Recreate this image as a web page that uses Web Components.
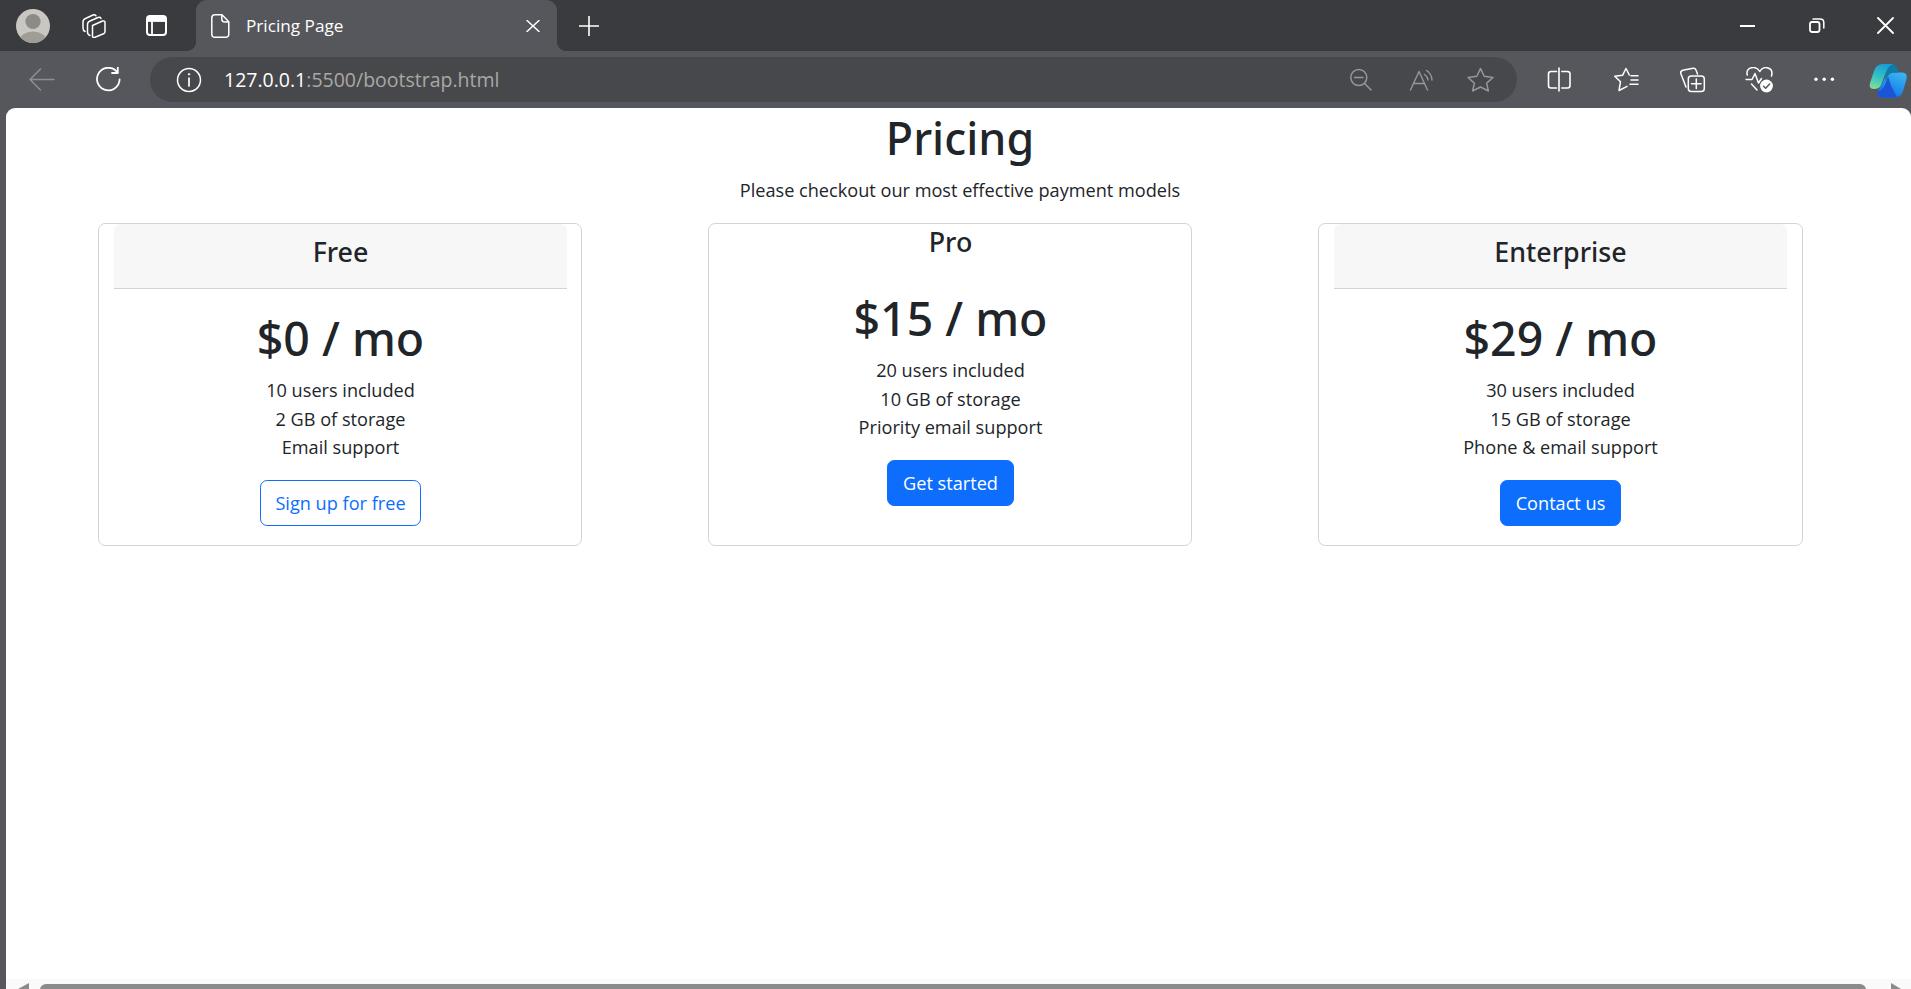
<!DOCTYPE html>
<html lang="en"><head><meta charset="utf-8"><title>Pricing Page</title>
<style>
html,body{margin:0;height:100%;overflow:hidden;background:#56575c}
body{font-family:"Open Sans","Noto Sans",sans-serif}
</style></head><body>
<browser-window>
  <tab-strip slot="tabs" title-text="Pricing Page"></tab-strip>
  <nav-toolbar slot="nav"></nav-toolbar>
  <pricing-page>
    <pricing-card slot="cards" name="Free" price="$0 / mo" action="Sign up for free" variant="outline">
      <div>10 users included</div><div>2 GB of storage</div><div>Email support</div>
    </pricing-card>
    <pricing-card slot="cards" name="Pro" price="$15 / mo" action="Get started" plain>
      <div>20 users included</div><div>10 GB of storage</div><div>Priority email support</div>
    </pricing-card>
    <pricing-card slot="cards" name="Enterprise" price="$29 / mo" action="Contact us" last>
      <div>30 users included</div><div>15 GB of storage</div><div>Phone &amp; email support</div>
    </pricing-card>
  </pricing-page>
</browser-window>
<script>
function def(name, html, setup){
  customElements.define(name, class extends HTMLElement{
    connectedCallback(){
      if(this.shadowRoot) return;
      const r=this.attachShadow({mode:'open'});
      r.innerHTML=typeof html==='function'?html(this):html;
      if(setup) setup(r,this);
    }
  });
}
const ic=(x,y,w,h,body,extra='')=>`<svg width="${w}" height="${h}" viewBox="${x} ${y} ${w} ${h}" fill="none" stroke="currentColor" stroke-linecap="round" stroke-linejoin="round" style="flex:none;display:block;${extra}">${body}</svg>`;

def('browser-window',`<style>
:host{display:flex;flex-direction:column;height:989px;width:1911px;overflow:hidden;background:#56575c}
.page{flex:1;min-height:0;margin-left:6px;background:#fff;border-radius:9px 9px 0 0;display:flex;flex-direction:column}
</style><slot name="tabs"></slot><slot name="nav"></slot><div class="page"><slot></slot><fake-scrollbar></fake-scrollbar></div>`);

def('tab-strip',h=>`<style>
:host{display:flex;align-items:center;height:51px;background:#3a3b3f;color:#fff;flex:none;padding-left:16px;box-sizing:border-box}
.tab{position:relative;flex:none;width:361px;height:51px;margin-left:29px;background:#56575c;border-radius:11px 11px 0 0;display:flex;align-items:center;box-sizing:border-box;padding-left:15px}
.tab::before,.tab::after{content:"";position:absolute;bottom:0;width:10px;height:10px}
.tab::before{left:-10px;background:radial-gradient(circle at 0 0,transparent 10px,#56575c 10.5px)}
.tab::after{right:-10px;background:radial-gradient(circle at 100% 0,transparent 10px,#56575c 10.5px)}
.title{font-size:17.2px;margin-left:16px;flex:1;white-space:nowrap;line-height:20px}
.sp{flex:1}
</style>
<svg width="34" height="34" viewBox="16 9 34 34" style="flex:none;display:block"><defs><clipPath id="av"><circle cx="33" cy="26" r="17"/></clipPath></defs><circle cx="33" cy="26" r="17" fill="#c9c7c2"/><g clip-path="url(#av)"><circle cx="33" cy="21.5" r="7.6" fill="#8e8a85"/><ellipse cx="33" cy="41" rx="13.5" ry="9.5" fill="#a09c96"/></g></svg>
${ic(82,13,24,24,`<g stroke-width="1.5"><path d="M92.5 24.5 L102.5 20 Q105 19.5 105 21.5 V30.5 Q105 32 103.5 32.8 L94.5 36.5 Q92.5 37 92.5 35 Z"/><path d="M101 17.5 Q100 15.5 98 16.5 L90 20 Q87.5 21 87.5 23.5 V31 Q87.5 33.5 90 34.5"/><path d="M96 14.8 Q95 13.2 93 14 L85.5 17.5 Q83 18.5 83 21 V27 Q83 29.5 85 30.5"/></g>`,'margin-left:32px')}
${ic(146,15,21,21,`<rect x="147" y="16" width="19" height="19" rx="3" stroke-width="2"/><path d="M147 21 V19 Q147 16 150 16 H163 Q166 16 166 19 V21 Z" fill="currentColor" stroke-width="1"/><path d="M152 21 V35" stroke-width="1.8"/>`,'margin-left:40px')}
<div class="tab">
${ic(211,14,19,24,`<path d="M215 14.8 H222 L228.8 21.8 V34 Q228.8 37.3 225.5 37.3 H215 Q211.8 37.3 211.8 34 V18 Q211.8 14.8 215 14.8Z M221.8 15 V19 Q221.8 22 224.8 22 H228.6" stroke-width="1.5"/>`)}
<span class="title">${h.getAttribute('title-text')}</span>
${ic(526,21,14,12,`<path d="M527 21.5 L539 32.5 M539 21.5 L527 32.5" stroke-width="1.5"/>`,'margin-right:17px')}
</div>
${ic(579,15,20,20,`<path d="M589 15.5 V34.5 M579.5 25 H598.5" stroke-width="1.6"/>`,'margin-left:22px')}
<span class="sp"></span>
${ic(1740,24,15,2,`<path d="M1740 25 H1755" stroke-width="2" stroke-linecap="butt"/>`)}
${ic(1809,18,16,16,`<rect x="1810" y="22" width="9.5" height="10" rx="2.2" stroke-width="1.8"/><path d="M1813 19 H1820 Q1823.8 19 1823.8 22.5 V28" stroke-width="1.5"/>`,'margin-left:54px')}
${ic(1877,17,17,17,`<path d="M1878 18 L1893 33 M1893 18 L1878 33" stroke-width="1.8"/>`,'margin-left:52px;margin-right:17px')}
`);

def('nav-toolbar',`<style>
:host{display:flex;align-items:center;height:57px;padding:0 3px 0 29px;box-sizing:border-box;background:#56575c;color:#fff;flex:none}
.addr{flex:none;margin-left:29px;width:1367px;height:45px;background:#47484c;border-radius:23px;display:flex;align-items:center;box-sizing:border-box;padding-left:26px;color:#fff}
.url{font-size:19.5px;margin-left:22px;flex:1;line-height:26px;white-space:nowrap;color:#a9a8a4}
.url b{font-weight:400;color:#fff}
</style>
${ic(29,67,26,23,`<path d="M54 78.5 H30 M40.5 68 L30 78.5 L40.5 89" stroke-width="1.6" />`,'color:#8d8e92')}
${ic(95,67,26,25,`<path d="M117.5 72.5 A11.3 11.3 0 1 0 119.6 79.5" stroke-width="1.8"/><path d="M117.8 67.5 V73 H112" stroke-width="1.8"/>`,'margin-left:40px')}
<div class="addr">
${ic(176,67,26,26,`<circle cx="189" cy="80" r="11.5" stroke-width="1.5"/><path d="M189 78 V86" stroke-width="1.7"/><circle cx="189" cy="74.3" r=".7" fill="currentColor"/>`)}
<span class="url"><b>127.0.0.1</b>:5500/bootstrap.html</span>
${ic(1350,68,22,23,`<circle cx="1358.8" cy="77.5" r="8" stroke-width="1.5"/><path d="M1354.6 77.5 H1363 M1364.6 83.5 L1371 90" stroke-width="1.5"/>`,'color:#96979a')}
${ic(1409,67,24,22,`<path d="M1410.5 88 L1419 69.5 L1427.5 88 M1413.5 81.5 H1424.5" stroke-width="1.4"/><path d="M1424.5 72.5 Q1427.5 74.5 1428 78 M1426.5 68.5 Q1431.5 71.5 1432 78" stroke-width="1.4"/>`,'color:#96979a;margin-left:37px')}
${ic(1467,67,27,25,`<path d="M1480.5 68.5 L1484.2 76.3 L1493 77.4 L1486.6 83.2 L1488.4 91 L1480.5 87 L1472.6 91 L1474.4 83.2 L1468 77.4 L1476.8 76.3 Z" stroke-width="1.5"/>`,'color:#96979a;margin-left:34px;margin-right:23px')}
</div>
${ic(1547,67,25,25,`<path d="M1556.5 71.5 H1551 Q1548.5 71.5 1548.5 74 V85.5 Q1548.5 88 1551 88 H1556.5 M1559 68 V91 M1561.8 71.5 H1567.5 Q1570 71.5 1570 74 V85.5 Q1570 88 1567.5 88 H1561.8" stroke-width="1.6"/>`,'margin-left:30px')}
${ic(1613,67,26,25,`<path d="M1629.3 75 L1626 68.5 L1622.5 75.3 L1614.7 76.3 L1620.5 81.7 L1619 90.5 L1627 86.3" stroke-width="1.5"/><path d="M1631 75.8 H1638 M1631 80 H1638 M1630 84.2 H1638" stroke-width="1.5"/>`,'margin-left:41px')}
${ic(1679,67,27,26,`<rect x="1688.3" y="76" width="16" height="15.5" rx="3" stroke-width="1.5"/><path d="M1696.3 79 V88.5 M1691.5 83.7 H1701" stroke-width="1.5"/><path d="M1686 87 L1680.8 73.5 Q1680.2 71 1682.8 70.2 L1693 68.3 Q1695.2 68 1696 70 L1697.5 74" stroke-width="1.5"/>`,'margin-left:40px')}
${ic(1745,67,29,26,`<path d="M1747.3 75 C1745 67 1756 65 1759.7 71.5 C1763.5 65 1774 67 1771.5 76" stroke-width="1.5"/><path d="M1746 79.5 H1752 L1755 73.5 L1758.5 83 L1761.5 78.5 M1751.5 84 L1757 90" stroke-width="1.5"/><circle cx="1766.5" cy="86" r="6.4" fill="currentColor" stroke="none"/><path d="M1763.5 86.2 L1765.7 88.3 L1769.6 84" stroke="#56575c" stroke-width="1.5"/>`,'margin-left:39px')}
${ic(1813,77,22,5,`<circle cx="1816" cy="79.3" r="1.7" fill="currentColor" stroke="none"/><circle cx="1824.2" cy="79.3" r="1.7" fill="currentColor" stroke="none"/><circle cx="1832.4" cy="79.3" r="1.7" fill="currentColor" stroke="none"/>`,'margin-left:39px')}
<svg width="40" height="36" viewBox="1868 62 40 36" style="flex:none;display:block;margin-left:33px">
<defs>
<linearGradient id="cl" x1="0.6" y1="0" x2="0.3" y2="1"><stop offset="0" stop-color="#1a9cd8"/><stop offset=".55" stop-color="#35c4c0"/><stop offset="1" stop-color="#7fdc9c"/></linearGradient>
<linearGradient id="cr" x1="0.8" y1="0" x2="0.3" y2="1"><stop offset="0" stop-color="#38b6f2"/><stop offset=".7" stop-color="#1c86e8"/><stop offset="1" stop-color="#1a6fe0"/></linearGradient>
</defs>
<path d="M1894 72.5 H1902 Q1908 72.5 1906.5 79 L1903 91 Q1901 97.5 1894 97.5 H1881 Q1876.5 97.5 1878 91 L1886 76 Q1889 72.5 1894 72.5Z" fill="url(#cr)"/>
<path d="M1888 76 Q1891 88 1897.5 97.5 H1881 Q1876.5 97.5 1878 91 Q1885 90 1888 76Z" fill="#1c54d6"/>
<path d="M1889 64 H1893 Q1897 64.5 1898.5 72.5 H1894 Q1889 72.5 1887 78 L1885.5 82 Q1884 70 1889 64Z" fill="#0e7ba8"/>
<path d="M1882 64 H1893 Q1888 66 1886 72 L1881 85 Q1879.5 89 1874 89 Q1868.5 89 1870 83 L1874 71 Q1876 64.5 1882 64Z" fill="url(#cl)"/>
</svg>
`);

def('pricing-page',`<style>
:host{display:block;flex:1;min-height:0;color:#212529}
.head{text-align:center;padding-left:3px}
h1{font-family:"Noto Sans","Open Sans",sans-serif;font-size:44.8px;font-weight:500;line-height:57.6px;margin:0 0 9.6px;position:relative;top:1px}
p{font-size:18.15px;line-height:28.8px;margin:0 0 19.2px;position:relative;top:1px}
.cards{display:grid;grid-template-columns:484px 484px 485px;column-gap:126px;padding-left:92px}
</style>
<div class="head"><h1>Pricing</h1><p>Please checkout our most effective payment models</p></div>
<div class="cards"><slot name="cards"></slot></div>`);

def('pricing-card',h=>`<style>
:host{display:block;border:1px solid #d2d3d4;border-radius:7.2px;box-sizing:border-box;text-align:center;padding:0 14.4px 0 15.4px;height:322.6px}
:host([last]){padding-right:15.4px}
.hd{background:#f7f7f7;border-bottom:1px solid #d2d3d4;padding:9.6px 0;border-radius:7px 7px 0 0}
:host([plain]) .hd{background:none;border:0;padding:0}
h4{font-family:"Noto Sans","Open Sans",sans-serif;font-size:26.8px;line-height:34.56px;font-weight:500;margin:0 0 9.6px;position:relative;top:1px}
.bd{padding:19.2px 0}
h1{font-family:"Noto Sans","Open Sans",sans-serif;font-size:46.4px;line-height:57.6px;font-weight:500;margin:0 0 9.6px;position:relative;top:2px}
.ls{font-size:18.15px;line-height:28.8px;margin-bottom:19.2px;position:relative;top:1px}
</style>
<div class="hd"><h4>${h.getAttribute('name')}</h4></div>
<div class="bd"><h1>${h.getAttribute('price')}</h1><div class="ls"><slot></slot></div>
<app-button variant="${h.getAttribute('variant')||'solid'}">${h.getAttribute('action')}</app-button></div>`);

def('app-button',`<style>
:host{display:inline-block;font-size:18.15px;line-height:28.8px;padding:7.9px 14.6px 6.9px;border:1px solid #0d6efd;border-radius:7.2px;background:#0d6efd;color:#fff}
:host([variant=outline]){background:#fff;color:#0d6efd}
</style><slot></slot>`);

def('fake-scrollbar',`<style>
:host{display:flex;flex:none;height:10px;background:#fafafa;overflow:hidden}
.t{margin:5px 0 0 10px;width:1826px;height:12px;background:#8b8b8b;border-radius:6px;flex:none}
svg{flex:none;display:block}
</style>
<svg width="12" height="10" style="margin-left:12px"><path d="M0 10 L11 4 V10Z" fill="#8b8b8b"/></svg>
<div class="t"></div>
<svg width="12" height="10" style="margin-left:25px"><path d="M0 4 L10 10 H0Z" fill="#8b8b8b"/></svg>`);
</script>
</body></html>
